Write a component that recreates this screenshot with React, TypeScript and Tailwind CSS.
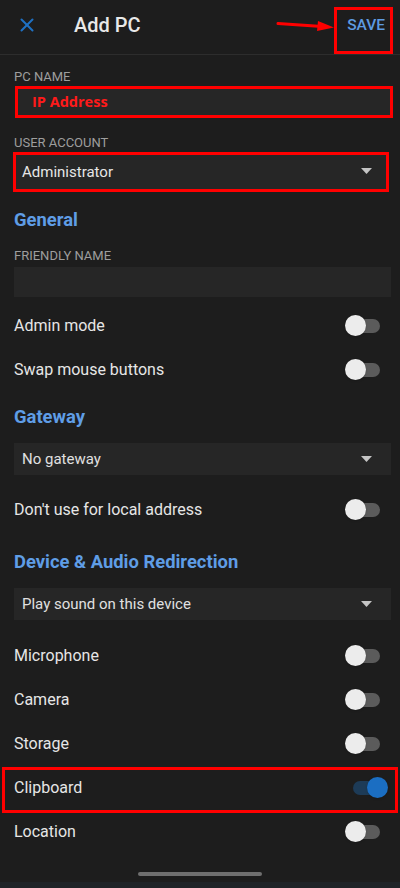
import { X } from "lucide-react";

const FONT = { fontFamily: "Roboto, 'Noto Sans', sans-serif" };

function Toggle({ on = false }: { on?: boolean }) {
  return (
    <div className="relative mr-[3px] h-[22px] w-[43px] shrink-0">
      <div
        className={`absolute left-[8px] top-[4px] h-[14px] w-[27px] rounded-full ${
          on ? "bg-[#1d3b57]" : "bg-[#5b5b5b]"
        }`}
      />
      <div
        className={`absolute top-0 h-[21px] w-[21px] rounded-full shadow ${
          on ? "left-[22px] bg-[#1b6ec2]" : "left-0 bg-[#ececec]"
        }`}
      />
    </div>
  );
}

function ToggleRow({ label, on }: { label: string; on?: boolean }) {
  return (
    <div className="flex h-[44px] items-center justify-between">
      <span className="text-[16px] text-[#e6e6e6]">{label}</span>
      <Toggle on={on} />
    </div>
  );
}

function Caret({ className = "mr-[19px]" }: { className?: string }) {
  return (
    <svg width="11" height="6" viewBox="0 0 11 6" className={`shrink-0 ${className}`}>
      <path d="M0 0h11L5.5 6z" fill="#c4c4c4" />
    </svg>
  );
}

function Dropdown({ value, className = "" }: { value: string; className?: string }) {
  return (
    <div className={`flex items-center justify-between bg-[#262626] ${className}`}>
      <span className="pl-[8px] text-[15px] text-[#e0e0e0]">{value}</span>
      <Caret />
    </div>
  );
}

function Label({ text, className = "" }: { text: string; className?: string }) {
  return (
    <div className={`h-4 text-[13px] leading-4 text-[#9e9e9e] ${className}`}>{text}</div>
  );
}

function Heading({ text, className = "" }: { text: string; className?: string }) {
  return (
    <div className={`h-6 text-[18.4px] font-bold leading-6 text-[#5f9de6] ${className}`}>
      {text}
    </div>
  );
}

export default function App() {
  return (
    <div className="relative h-[888px] w-[400px] overflow-hidden bg-[#1d1d1d]" style={FONT}>
      <header className="relative flex h-[55px] items-center border-b border-[#2d2d2d]">
        <X className="-mt-[4px] ml-[16px] h-[22px] w-[22px] text-[#1f70c2]" strokeWidth={2.2} />
        <h1 className="-mt-[4px] ml-[36px] flex-1 text-[20px] font-medium text-[#e8e8e8]">
          Add PC
        </h1>
        <div className="mr-[7px] mt-[7px] flex h-[47px] w-[59px] items-start justify-end self-start border-[3px] border-[#ff0000] pr-[5px] pt-[5px]">
          <span className="text-[15.5px] font-medium leading-5 text-[#5d9be2]">SAVE</span>
        </div>
        <svg
          className="absolute left-[276px] top-[18px]"
          width="60"
          height="14"
          viewBox="0 0 60 14"
        >
          <path d="M2 5.5 L46 8.5" stroke="#ff0000" strokeWidth="3" strokeLinecap="round" />
          <path d="M42 3 L58 9.5 L41 13 z" fill="#ff0000" />
        </svg>
      </header>

      <div className="flex flex-col pl-[14px] pr-[9px]">
        <Label text="PC NAME" className="mt-[14px]" />
        <div className="ml-px mt-px flex h-[32px] w-[378px] items-center border-[3px] border-[#ff0000] bg-[#262626]">
          <span
            className="pl-[14px] text-[14.5px] font-bold text-[#ff1a1a]"
            style={{ fontFamily: "'Open Sans', sans-serif" }}
          >
            IP Address
          </span>
        </div>

        <Label text="USER ACCOUNT" className="mt-[17px]" />
        <div className="-ml-px mt-px flex h-[40px] w-[376px] items-center justify-between border-[3px] border-[#ff0000] bg-[#262626]">
          <span className="pl-[6px] text-[15px] text-[#e6e6e6]">Administrator</span>
          <Caret className="mr-[14px] -mt-[2px]" />
        </div>

        <Heading text="General" className="mt-[16px]" />
        <Label text="FRIENDLY NAME" className="mt-[16px]" />
        <div className="mt-[3px] h-[30px] bg-[#262626]" />

        <div className="mt-[7px]">
          <ToggleRow label="Admin mode" />
          <ToggleRow label="Swap mouse buttons" />
        </div>

        <Heading text="Gateway" className="mt-[13px]" />
        <Dropdown value="No gateway" className="mt-[14px] h-[32px]" />
        <div className="mt-[13px]">
          <ToggleRow label="Don't use for local address" />
        </div>

        <Heading text="Device & Audio Redirection" className="mt-[18px]" />
        <Dropdown value="Play sound on this device" className="mt-[14px] h-[32px]" />

        <div className="mt-[14px]">
          <ToggleRow label="Microphone" />
          <ToggleRow label="Camera" />
          <ToggleRow label="Storage" />
          <div className="relative">
            <ToggleRow label="Clipboard" on />
            <div className="pointer-events-none absolute -left-[12px] -right-[7px] top-[1px] h-[46px] border-[3px] border-[#ff0000]" />
          </div>
          <ToggleRow label="Location" />
        </div>
      </div>

      <div className="absolute bottom-0 left-0 right-0 flex h-[34px] flex-col items-center">
        <div className="mt-[18px] h-[4px] w-[124px] rounded-full bg-[#6f6f6f]" />
        <div className="mt-auto h-[6px] w-full bg-[#1f2327]" />
      </div>
    </div>
  );
}
